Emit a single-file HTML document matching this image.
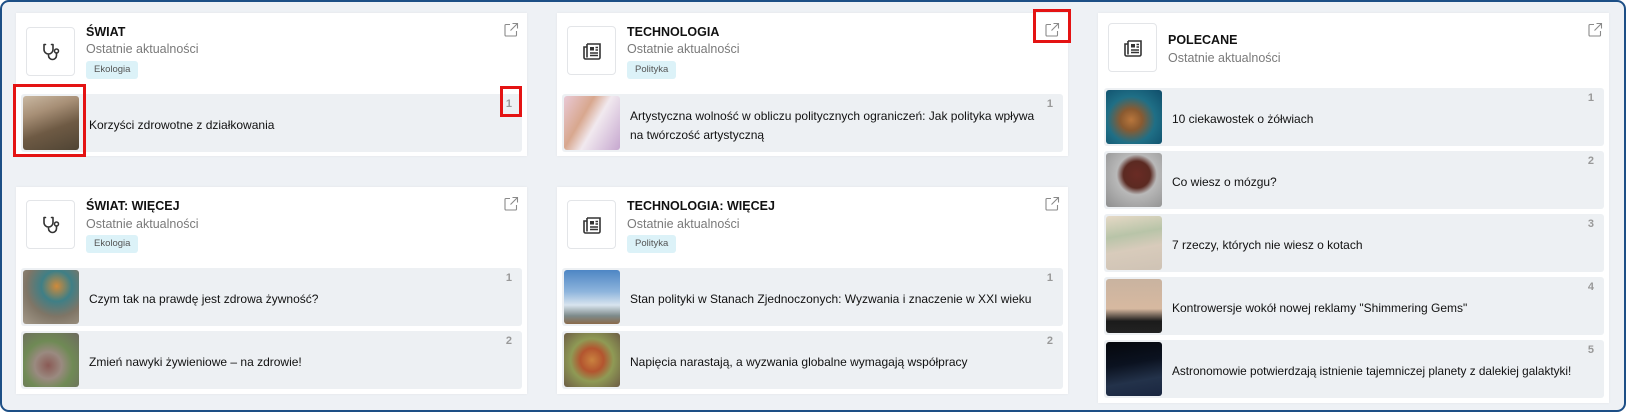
<!DOCTYPE html>
<html><head><meta charset="utf-8"><style>
*{box-sizing:border-box;margin:0;padding:0}
body{width:1627px;height:413px;overflow:hidden;background:#fff;font-family:"Liberation Sans",sans-serif;position:relative}
.frame{position:absolute;left:0;top:0;width:1626px;height:412px;border:2px solid #1d4f86;border-radius:9px;background:#eef1f5}
.card{position:absolute;background:#fff;box-shadow:0 0 3px rgba(0,0,0,.05)}
.ib{position:absolute;width:49px;height:49px;border:1px solid #e3e5e8;border-radius:4px;display:flex;align-items:center;justify-content:center}
.t{position:absolute;font-size:12.5px;font-weight:bold;color:#111}
.s{position:absolute;font-size:12.5px;color:#7a7a7a}
.tag{position:absolute;height:18px;padding:0 8px;background:#dcf2f8;border-radius:3px;font-size:9.5px;color:#555;line-height:18px}
.ext{position:absolute;width:16px;height:16px}
.row{position:absolute;height:58px;background:#edf0f3;border-radius:3px}
.row .im{position:absolute;left:2px;top:2px;width:56px;height:54px;border-radius:3px}
.row .tx{position:absolute;left:68px;right:10px;top:0;bottom:0;display:flex;align-items:center;padding-top:5px;font-size:12px;color:#111;line-height:19px}
.row .n{position:absolute;right:10px;top:4px;font-size:11px;font-weight:bold;color:#999}
.red{position:absolute;border:3px solid #e41313}
</style></head><body>
<div class="frame"></div>

<svg width="0" height="0" style="position:absolute">
<defs>
<symbol id="ex" viewBox="0 0 16 16"><path d="M7 2.5H3a1 1 0 0 0-1 1v9.5a1 1 0 0 0 1 1h9.5a1 1 0 0 0 1-1V9M9.5 1.5h5v5M14.5 1.5L7.5 8.5" fill="none" stroke="#8a8a8a" stroke-width="1.1"/></symbol>
<symbol id="st" viewBox="0 0 24 24"><path d="M5 4.5v5a4.5 4.5 0 0 0 9 0v-5M5 4.5h1.5M14 4.5h-1.5M9.5 14v1.5a4 4 0 0 0 8 0V13" fill="none" stroke="#333" stroke-width="1.6" stroke-linecap="round"/><circle cx="17.5" cy="11" r="2" fill="none" stroke="#333" stroke-width="1.5"/></symbol>
<symbol id="np" viewBox="0 0 24 24"><path d="M7 5h13v13.5a1.5 1.5 0 0 1-1.5 1.5H5.5A1.5 1.5 0 0 1 4 18.5V8h3" fill="none" stroke="#333" stroke-width="1.6"/><path d="M7 5v13.5" stroke="#333" stroke-width="1.6"/><rect x="10" y="8" width="4" height="3.5" fill="#333"/><path d="M15.5 8.5h2.5M15.5 11h2.5M10 14h8M10 16.5h8" stroke="#333" stroke-width="1.4"/></symbol>
</defs></svg>

<!-- Card 1 -->
<div class="card" style="left:16px;top:13px;width:511px;height:143px">
<div class="ib" style="left:10px;top:14px"><svg width="24" height="24"><use href="#st"/></svg></div>
<div class="t" style="left:70px;top:12px">ŚWIAT</div>
<div class="s" style="left:70px;top:29px">Ostatnie aktualności</div>
<div class="tag" style="left:70px;top:48px">Ekologia</div>
<svg class="ext" style="left:487px;top:9px"><use href="#ex"/></svg>
<div class="row" style="left:5px;top:81px;width:501px"><div class="im" style="background:linear-gradient(160deg,#c9b8a2 0%,#a78f76 30%,#6e5a44 60%,#4f4434 100%)"></div><div class="tx">Korzyści zdrowotne z działkowania</div><div class="n">1</div></div>
</div>

<!-- Card 2 -->
<div class="card" style="left:557px;top:13px;width:511px;height:143px">
<div class="ib" style="left:10px;top:13px"><svg width="24" height="24"><use href="#np"/></svg></div>
<div class="t" style="left:70px;top:12px">TECHNOLOGIA</div>
<div class="s" style="left:70px;top:29px">Ostatnie aktualności</div>
<div class="tag" style="left:70px;top:48px">Polityka</div>
<svg class="ext" style="left:487px;top:9px"><use href="#ex"/></svg>
<div class="row" style="left:5px;top:81px;width:501px"><div class="im" style="background:linear-gradient(120deg,#e9c9d6 0%,#d8a78e 35%,#f1e9ef 55%,#c6a7cf 100%)"></div><div class="tx" style="right:18px">Artystyczna wolność w obliczu politycznych ograniczeń: Jak polityka wpływa na twórczość artystyczną</div><div class="n">1</div></div>
</div>

<!-- Card 3 -->
<div class="card" style="left:1098px;top:13px;width:511px;height:390px">
<div class="ib" style="left:10px;top:10px"><svg width="24" height="24"><use href="#np"/></svg></div>
<div class="t" style="left:70px;top:20px">POLECANE</div>
<div class="s" style="left:70px;top:38px">Ostatnie aktualności</div>
<svg class="ext" style="left:489px;top:9px"><use href="#ex"/></svg>
<div class="row" style="left:6px;top:75px;width:500px"><div class="im" style="background:radial-gradient(ellipse at 45% 55%,#b8763c 0%,#8a5a30 25%,#1f6f86 55%,#0f4d6a 100%)"></div><div class="tx">10 ciekawostek o żółwiach</div><div class="n">1</div></div>
<div class="row" style="left:6px;top:138px;width:500px"><div class="im" style="background:radial-gradient(circle at 55% 40%,#6a2b24 0%,#5b2a22 30%,#b9b9b9 45%,#8e8e8e 100%)"></div><div class="tx">Co wiesz o mózgu?</div><div class="n">2</div></div>
<div class="row" style="left:6px;top:201px;width:500px"><div class="im" style="background:linear-gradient(170deg,#e6d9c6 0%,#b8c4a8 35%,#d8cbbb 60%,#cfc3b5 100%)"></div><div class="tx">7 rzeczy, których nie wiesz o kotach</div><div class="n">3</div></div>
<div class="row" style="left:6px;top:264px;width:500px"><div class="im" style="background:linear-gradient(180deg,#c9b3a0 0%,#d7b9a0 55%,#1b1b1b 78%,#222 100%)"></div><div class="tx">Kontrowersje wokół nowej reklamy "Shimmering Gems"</div><div class="n">4</div></div>
<div class="row" style="left:6px;top:327px;width:500px"><div class="im" style="background:linear-gradient(170deg,#05070c 0%,#0b1220 40%,#23324a 70%,#1a2640 100%)"></div><div class="tx" style="font-size:11.8px;right:4px;white-space:nowrap">Astronomowie potwierdzają istnienie tajemniczej planety z dalekiej galaktyki!</div><div class="n">5</div></div>
</div>

<!-- Card 4 -->
<div class="card" style="left:16px;top:187px;width:511px;height:207px">
<div class="ib" style="left:10px;top:13px"><svg width="24" height="24"><use href="#st"/></svg></div>
<div class="t" style="left:70px;top:12px">ŚWIAT: WIĘCEJ</div>
<div class="s" style="left:70px;top:30px">Ostatnie aktualności</div>
<div class="tag" style="left:70px;top:48px">Ekologia</div>
<svg class="ext" style="left:487px;top:9px"><use href="#ex"/></svg>
<div class="row" style="left:5px;top:81px;width:501px"><div class="im" style="background:radial-gradient(circle at 60% 30%,#d08a3a 0%,#3f7f86 30%,#7f7566 60%,#a59a8a 100%)"></div><div class="tx">Czym tak na prawdę jest zdrowa żywność?</div><div class="n">1</div></div>
<div class="row" style="left:5px;top:144px;width:501px"><div class="im" style="background:radial-gradient(circle at 45% 60%,#8a5a55 0%,#9a8a80 30%,#6f8a55 55%,#6e6a60 100%)"></div><div class="tx">Zmień nawyki żywieniowe – na zdrowie!</div><div class="n">2</div></div>
</div>

<!-- Card 5 -->
<div class="card" style="left:557px;top:187px;width:511px;height:207px">
<div class="ib" style="left:10px;top:13px"><svg width="24" height="24"><use href="#np"/></svg></div>
<div class="t" style="left:70px;top:12px">TECHNOLOGIA: WIĘCEJ</div>
<div class="s" style="left:70px;top:30px">Ostatnie aktualności</div>
<div class="tag" style="left:70px;top:48px">Polityka</div>
<svg class="ext" style="left:487px;top:9px"><use href="#ex"/></svg>
<div class="row" style="left:5px;top:81px;width:501px"><div class="im" style="background:linear-gradient(180deg,#4e86c4 0%,#8db4dc 40%,#d8e4ee 65%,#7d8a8a 85%,#8b6a4a 100%)"></div><div class="tx" style="white-space:nowrap">Stan polityki w Stanach Zjednoczonych: Wyzwania i znaczenie w XXI wieku</div><div class="n">1</div></div>
<div class="row" style="left:5px;top:144px;width:501px"><div class="im" style="background:radial-gradient(circle at 50% 50%,#c9823f 0%,#b3552f 30%,#8f9a55 55%,#6d5d45 100%)"></div><div class="tx">Napięcia narastają, a wyzwania globalne wymagają współpracy</div><div class="n">2</div></div>
</div>

<!-- annotation boxes -->
<div class="red" style="left:13px;top:84px;width:73px;height:73px"></div>
<div class="red" style="left:500px;top:86px;width:22px;height:31px"></div>
<div class="red" style="left:1033px;top:9px;width:38px;height:34px"></div>
</body></html>
